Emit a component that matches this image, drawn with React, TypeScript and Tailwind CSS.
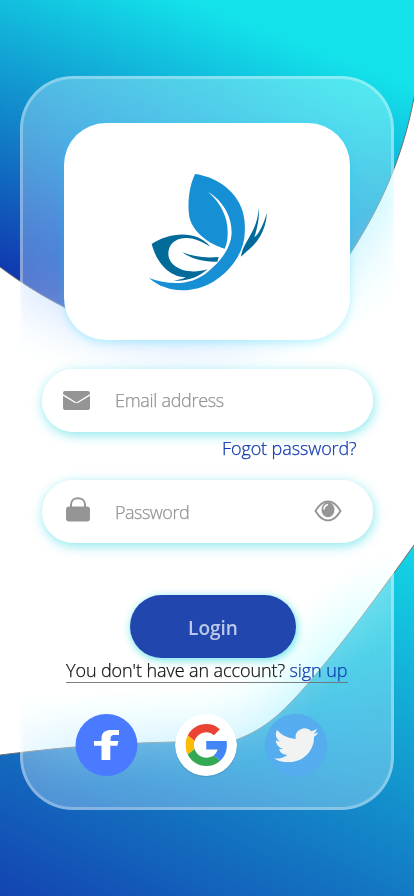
import React from "react";

function Background() {
  return (
    <svg className="absolute inset-0" width="414" height="896" viewBox="0 0 414 896" fill="none">
      <defs>
        <linearGradient id="top" gradientUnits="userSpaceOnUse" x1="0" y1="270" x2="115" y2="-28">
          <stop stopColor="#1039af" />
          <stop offset="1" stopColor="#13e2ea" />
        </linearGradient>
        <linearGradient id="bottom" gradientUnits="userSpaceOnUse" x1="0" y1="920" x2="248" y2="416">
          <stop stopColor="#133eae" />
          <stop offset="1" stopColor="#13e2ea" />
        </linearGradient>
      </defs>
      <path
        d="M-2 -2V265.500L0 267C20 282 42 296 64 307C150 350 285 350 350 254C383 203 403 155 414 98L416 88V-2Z"
        fill="url(#top)"
        stroke="#707070"
      />
      <path
        d="M-2 755.300L0 755C45 749.500 95 743.500 175 742C205 741.500 222 742 237 739.500C265 729 282 713 305 687C345 641 382 590 414 545L416 542V898H-2Z"
        fill="url(#bottom)"
        stroke="#707070"
      />
    </svg>
  );
}

function Logo() {
  return (
    <svg width="140" height="135" viewBox="0 0 420 405">
      <path
        fill="#178fd4"
        d="M165 27C225 35 275 70 298 115C315 148 317 182 313 220C304 275 267 322 220 350C155 388 76 383 27 339C92 362 156 361 204 320C240 291 273 251 275 205C276 150 246 106 204 80C246 117 263 160 263 200C263 224 260 238 254 251C205 237 158 200 148 156C142 112 147 65 165 27Z"
      />
      <g fill="#036b9a">
        <path d="M35 237C82 205 166 191 211 245C183 228 158 218 137 219C100 221 85 242 85 267C86 306 140 332 203 313C178 334 145 350 101 347C116 345 128 342 137 337C88 335 50 294 35 237Z" />
        <path d="M127 262C160 275 195 280 236 276L232 290C195 292 153 282 127 262Z" />
        <path d="M303 275C310 228 352 202 356 130C359 158 352 190 343 217C362 200 371 174 381 143C377 202 350 235 319 260Z" />
      </g>
    </svg>
  );
}

const field =
  "ml-[19px] flex h-[63px] w-[331px] items-center rounded-full bg-white/90 shadow-[1px_3px_12px_rgba(19,210,220,0.5)]";

export default function App() {
  return (
    <main className="relative h-[896px] w-[414px] overflow-hidden bg-white font-['Open_Sans',sans-serif] text-[18px] font-light [-webkit-text-stroke:0.25px]">
      <Background />
      <section className="relative ml-5 h-[734px] w-[374px] translate-y-[76px]">
        <div className="absolute inset-0 rounded-[53px] opacity-[0.32] backdrop-blur-[40px] backdrop-brightness-[1.08] backdrop-saturate-200" />
        <div className="relative flex h-full flex-col items-start rounded-[53px] border-[3px] border-white/30 bg-white/[0.28] bg-clip-border">
          <div className="mt-[44px] ml-[41px] flex h-[217px] w-[286px] items-start rounded-[42px] bg-white pt-[42px] pl-[76px] shadow-[0_3px_8px_rgba(19,210,250,0.28)]">
            <Logo />
          </div>

          <div className={field + " mt-[29px]"}>
            <svg className="ml-[21px]" width="27" height="19" viewBox="0 0 27 19" fill="#959595">
              <path d="M2 0H25Q27 0 27 1.800V3L13.500 11.600L0 3V1.800Q0 0 2 0Z" />
              <path d="M0 4.800L12 12H15L27 4.800V17Q27 19 25 19H2Q0 19 0 17Z" />
            </svg>
            <span className="ml-[25px] tracking-[-0.3px] text-[#909396]">Email address</span>
          </div>
          <a className="mt-[4px] ml-[199px] leading-6 tracking-[-0.1px] whitespace-nowrap text-[#1039af]">Fogot password?</a>

          <div className={field + " mt-[20px]"}>
            <svg className="mb-[5px] ml-[24px]" width="24" height="25" viewBox="0 0 24 25">
              <rect y="9.500" width="24" height="15" rx="3" fill="#959595" />
              <path d="M5 11V7.500C5 -1 19 -1 19 7.500V11" fill="none" stroke="#959595" strokeWidth="2" />
            </svg>
            <span className="mt-px ml-[25px] w-[199px] tracking-[-0.5px] text-[#909396]">Password</span>
            <svg className="mb-[2px]" width="28" height="22" viewBox="0 0 28 22">
              <path d="M1.500 11Q7 1.500 14 1.500T26.500 11Q21 20.500 14 20.500T1.500 11Z" fill="none" stroke="#959595" strokeWidth="1.900" />
              <ellipse cx="14" cy="9.700" rx="6.500" ry="7.500" fill="#959595" />
              <path d="M10 9Q10.300 5.500 13.500 4.800" fill="none" stroke="white" strokeWidth="1.500" strokeLinecap="round" />
            </svg>
          </div>

          <button className="mt-[52px] ml-[107px] h-[63px] w-[166px] rounded-full bg-[#2147af] pt-[3px] text-[19px] font-semibold text-white/70 shadow-[1px_2px_9px_rgba(19,210,220,0.65)] [-webkit-text-stroke:0px]">
            Login
          </button>
          <p className="ml-[43px] h-[25px] w-[282px] border-b border-[#707070]/90 leading-[25px] tracking-[-0.09px] whitespace-nowrap text-[#111]">
            You don't have an account? <a className="text-[#1039af]">sign up</a>
          </p>

          <div className="mt-[31px] ml-[52px] flex">
            <svg width="63" height="62" viewBox="0 0 62 62">
              <circle cx="31" cy="31" r="31" fill="#4a7aff" />
              <path fill="white" d="M26 46V31.700H18.500V27H26V25C26 18.500 29.500 16 36 16H43.500V21H39C36 21 35.200 22 35 25V27H43L41.800 31.700H34.800V46Z" />
            </svg>
            <svg className="ml-[37px] rounded-full shadow-[0_1px_1px_rgba(80,100,110,0.3)]" width="62" height="62" viewBox="0 0 62 62">
              <circle cx="31" cy="31" r="31" fill="white" />
              <svg x="10.500" y="10" width="41.500" height="42" viewBox="3 3 42 42" preserveAspectRatio="none">
                <path fill="#ea4335" d="M24 3C15.800 3 8.700 7.700 5.300 14.500L12.200 19.900C13.900 15 18.500 11.300 24 11.300C27.200 11.300 29.700 12.400 31.700 14.200L37.800 8.200C34.100 4.900 29.500 3 24 3Z" />
                <path fill="#fbbc05" d="M5.300 14.500C2.200 20.500 2.200 27.500 5.300 33.500L12.200 28.100C11.300 25.400 11.300 22.600 12.200 19.900Z" />
                <path fill="#34a853" d="M5.300 33.500C8.700 40.300 15.800 45 24 45C29.600 45 34.600 43.100 38.200 39.700L31.500 34.500C29.600 35.800 27 36.700 24 36.700C18.500 36.700 13.900 33 12.200 28.100Z" />
                <path fill="#4285f4" d="M24 20V28.600H35.400C34.900 31 33.500 33.100 31.500 34.500L38.200 39.700C43 35.300 45.800 28.600 44.600 20Z" />
              </svg>
            </svg>
            <svg className="ml-[28px]" width="62" height="62" viewBox="0 0 62 62">
              <circle cx="31" cy="31" r="31" fill="#55acee" />
              <svg x="9" y="14" width="44.500" height="34" viewBox="0 2 24 19.600" preserveAspectRatio="none">
                <path fill="#f1f3f3" d="M23.953 4.570a10 10 0 01-2.825.775 4.958 4.958 0 002.163-2.723c-.951.555-2.005.959-3.127 1.184a4.920 4.920 0 00-8.384 4.482C7.690 8.095 4.067 6.130 1.640 3.162a4.822 4.822 0 00-.666 2.475c0 1.710.870 3.213 2.188 4.096a4.904 4.904 0 01-2.228-.616v.060a4.923 4.923 0 003.946 4.827 4.996 4.996 0 01-2.212.085 4.936 4.936 0 004.604 3.417 9.867 9.867 0 01-6.102 2.105c-.390 0-.779-.023-1.170-.067a13.995 13.995 0 007.557 2.209c9.053 0 13.998-7.496 13.998-13.985 0-.210 0-.420-.015-.630A9.935 9.935 0 0024 4.590z" />
              </svg>
            </svg>
          </div>
        </div>
      </section>
    </main>
  );
}
